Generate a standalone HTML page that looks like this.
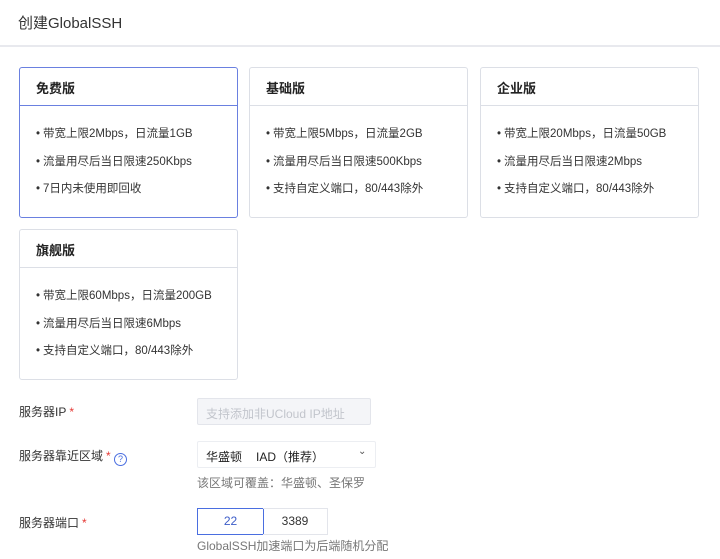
<!DOCTYPE html>
<html><head><meta charset="utf-8"><style>
*{box-sizing:border-box;margin:0;padding:0}
body{width:720px;height:559px;background:#fff;font-family:"Liberation Sans","Noto Sans CJK SC",sans-serif;color:#333;position:relative;overflow:hidden}
.a{position:absolute}
.title{left:18px;top:12px;font-size:15px;color:#333}
.hr{left:0;top:45px;width:720px;height:2px;background:#e8e9ee}
.card{position:absolute;width:219px;height:151px;border:1px solid #dcdfe6;border-radius:3px;background:#fff}
.card.sel{border-color:#6a80e0}
.card .h{height:38px;border-bottom:1px solid #dcdfe6;padding:10px 0 0 16px;font-size:13px;font-weight:bold;color:#222}
.card.sel .h{border-bottom-color:#6a80e0}
.card ul{list-style:none;padding:19px 0 0 16px;font-size:11.5px;color:#333}
.card li{height:27.5px}
.card li:before{content:"•";margin-right:3px}
.lbl{font-size:12px;color:#333;left:19px}
.req{color:#e53935;margin-left:3px}
.hint{font-size:12px;color:#777;left:197px}
</style></head><body>
<div class="a title">创建GlobalSSH</div>
<div class="a hr"></div>
<div class="card sel" style="left:19px;top:67px"><div class="h">免费版</div><ul><li>带宽上限2Mbps，日流量1GB</li><li>流量用尽后当日限速250Kbps</li><li>7日内未使用即回收</li></ul></div>
<div class="card" style="left:249px;top:67px"><div class="h">基础版</div><ul><li>带宽上限5Mbps，日流量2GB</li><li>流量用尽后当日限速500Kbps</li><li>支持自定义端口，80/443除外</li></ul></div>
<div class="card" style="left:480px;top:67px"><div class="h">企业版</div><ul><li>带宽上限20Mbps，日流量50GB</li><li>流量用尽后当日限速2Mbps</li><li>支持自定义端口，80/443除外</li></ul></div>
<div class="card" style="left:19px;top:229px"><div class="h">旗舰版</div><ul><li>带宽上限60Mbps，日流量200GB</li><li>流量用尽后当日限速6Mbps</li><li>支持自定义端口，80/443除外</li></ul></div>

<div class="a lbl" style="top:403px">服务器IP<span class="req">*</span></div>
<div class="a" style="left:197px;top:398px;width:174px;height:27px;background:#f4f5f8;border:1px solid #e3e5eb;border-radius:2px;font-size:12px;color:#c2c5cc;padding:6px 0 0 8px">支持添加非UCloud IP地址</div>

<div class="a lbl" style="top:447px">服务器靠近区域<span class="req">*</span> <span style="display:inline-block;width:13px;height:13px;border:1px solid #4a6ee0;border-radius:50%;color:#4a6ee0;font-size:9px;text-align:center;line-height:11px;vertical-align:-2px">?</span></div>
<div class="a" style="left:197px;top:441px;width:179px;height:27px;border:1px solid #eceef2;border-radius:2px;font-size:12px;color:#222;padding:6px 0 0 8px">华盛顿<span style="position:absolute;left:58px">IAD（推荐）</span><span style="position:absolute;left:160px;top:4px;font-size:10px;color:#555">⌄</span></div>
<div class="a hint" style="top:474px">该区域可覆盖：华盛顿、圣保罗</div>

<div class="a lbl" style="top:514px">服务器端口<span class="req">*</span></div>
<div class="a" style="left:197px;top:508px;width:67px;height:27px;border:1px solid #4a6ee0;font-size:12px;color:#3c5cc8;text-align:center;line-height:25px">22</div>
<div class="a" style="left:263px;top:508px;width:65px;height:27px;border:1px solid #e3e5eb;border-left:none;font-size:12px;color:#333;text-align:center;line-height:25px">3389</div>
<div class="a hint" style="top:537px">GlobalSSH加速端口为后端随机分配</div>
</body></html>
